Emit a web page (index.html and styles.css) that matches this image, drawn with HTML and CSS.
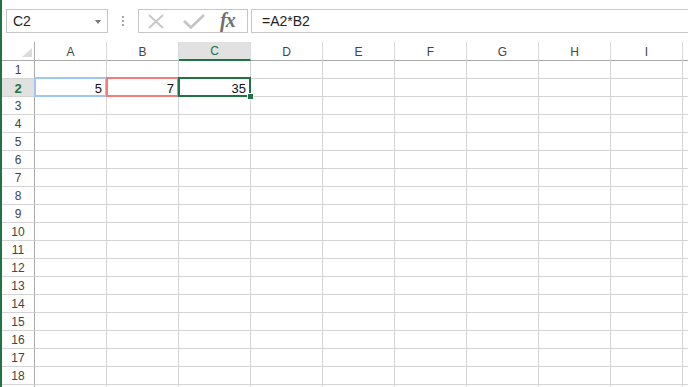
FILE: index.html
```html
<!DOCTYPE html>
<html lang="ja">
<head>
    <meta charset="UTF-8">
    <title>Book1 - Excel</title>
    <link rel="stylesheet" href="styles.css">
</head>
<body>
<div class="window">
    <div class="formula-bar">
        <div class="name-box">
            <span>C2</span>
            <span class="arrow"></span>
        </div>
        <div class="grip"><i></i><i></i><i></i></div>
        <div class="fx-box">
            <svg class="cancel" width="18" height="15" viewBox="0 0 18 15">
                <path d="M2 1 L16 14 M16 1 L2 14" stroke="#c9c9c9" stroke-width="2" fill="none"/>
            </svg>
            <svg class="enter" width="22" height="15" viewBox="0 0 22 15">
                <path d="M1 7 L8 13.5 L21 1" stroke="#c4c4c4" stroke-width="2.6" fill="none"/>
            </svg>
            <span class="fx">fx</span>
        </div>
        <div class="formula">=A2*B2</div>
    </div>

    <table class="sheet">
        <colgroup>
            <col class="col-head">
            <col class="col"><col class="col"><col class="col"><col class="col"><col class="col">
            <col class="col"><col class="col"><col class="col"><col class="col">
            <col>
        </colgroup>
        <thead>
            <tr class="head-row">
                <th class="corner"><span class="tri"></span></th>
                <th>A</th><th>B</th><th class="active">C</th><th>D</th><th>E</th>
                <th>F</th><th>G</th><th>H</th><th>I</th><th></th>
            </tr>
        </thead>
        <tbody>
            <tr><th>1</th><td></td><td></td><td></td><td></td><td></td><td></td><td></td><td></td><td></td><td></td></tr>
            <tr>
                <th class="active">2</th>
                <td class="num ref-a">5</td>
                <td class="num ref-b">7</td>
                <td class="num current">35<span class="handle"></span></td>
                <td></td><td></td><td></td><td></td><td></td><td></td><td></td>
            </tr>
            <tr><th>3</th><td></td><td></td><td></td><td></td><td></td><td></td><td></td><td></td><td></td><td></td></tr>
            <tr><th>4</th><td></td><td></td><td></td><td></td><td></td><td></td><td></td><td></td><td></td><td></td></tr>
            <tr><th>5</th><td></td><td></td><td></td><td></td><td></td><td></td><td></td><td></td><td></td><td></td></tr>
            <tr><th>6</th><td></td><td></td><td></td><td></td><td></td><td></td><td></td><td></td><td></td><td></td></tr>
            <tr><th>7</th><td></td><td></td><td></td><td></td><td></td><td></td><td></td><td></td><td></td><td></td></tr>
            <tr><th>8</th><td></td><td></td><td></td><td></td><td></td><td></td><td></td><td></td><td></td><td></td></tr>
            <tr><th>9</th><td></td><td></td><td></td><td></td><td></td><td></td><td></td><td></td><td></td><td></td></tr>
            <tr><th>10</th><td></td><td></td><td></td><td></td><td></td><td></td><td></td><td></td><td></td><td></td></tr>
            <tr><th>11</th><td></td><td></td><td></td><td></td><td></td><td></td><td></td><td></td><td></td><td></td></tr>
            <tr><th>12</th><td></td><td></td><td></td><td></td><td></td><td></td><td></td><td></td><td></td><td></td></tr>
            <tr><th>13</th><td></td><td></td><td></td><td></td><td></td><td></td><td></td><td></td><td></td><td></td></tr>
            <tr><th>14</th><td></td><td></td><td></td><td></td><td></td><td></td><td></td><td></td><td></td><td></td></tr>
            <tr><th>15</th><td></td><td></td><td></td><td></td><td></td><td></td><td></td><td></td><td></td><td></td></tr>
            <tr><th>16</th><td></td><td></td><td></td><td></td><td></td><td></td><td></td><td></td><td></td><td></td></tr>
            <tr><th>17</th><td></td><td></td><td></td><td></td><td></td><td></td><td></td><td></td><td></td><td></td></tr>
            <tr><th>18</th><td></td><td></td><td></td><td></td><td></td><td></td><td></td><td></td><td></td><td></td></tr>
            <tr><th></th><td></td><td></td><td></td><td></td><td></td><td></td><td></td><td></td><td></td><td></td></tr>
        </tbody>
    </table>
</div>
</body>
</html>
```

FILE: styles.css
```css
* {
    margin: 0;
    padding: 0;
    box-sizing: border-box;
}
body {
    font-family: "Liberation Sans", Arial, sans-serif;
    background: #ffffff;
    overflow: hidden;
}
.window {
    width: 688px;
    height: 387px;
    border-left: 2px solid #217346;
    overflow: hidden;
}

/* formula bar */
.formula-bar {
    display: flex;
    align-items: flex-start;
    height: 42px;
    padding-top: 9px;
}
.name-box {
    display: flex;
    align-items: center;
    justify-content: space-between;
    width: 102px;
    height: 24px;
    margin-left: 4px;
    padding: 0 6px 0 6px;
    border: 1px solid #c6c6c6;
    font-size: 14px;
    color: #222;
}
.name-box .arrow {
    width: 0;
    height: 0;
    border-left: 3.5px solid transparent;
    border-right: 3.5px solid transparent;
    border-top: 4px solid #777;
    margin-top: 1px;
}
.grip {
    display: flex;
    flex-direction: column;
    align-items: center;
    gap: 2px;
    width: 30px;
    padding-top: 7px;
}
.grip i {
    width: 2px;
    height: 2px;
    background: #a6a6a6;
}
.fx-box {
    display: flex;
    align-items: center;
    width: 110px;
    height: 24px;
    border: 1px solid #c6c6c6;
}
.fx-box .cancel {
    margin-left: 8px;
}
.fx-box .enter {
    margin-left: 18px;
}
.fx-box .fx {
    margin-left: 15px;
    font-family: "Liberation Serif", "Times New Roman", serif;
    font-style: italic;
    font-weight: bold;
    font-size: 20px;
    color: #707070;
    letter-spacing: -1px;
    line-height: 1;
    margin-top: -2px;
}
.formula {
    flex: 1;
    height: 24px;
    margin-left: 3px;
    margin-right: -4px;
    padding-left: 10px;
    border: 1px solid #c6c6c6;
    font-size: 14px;
    line-height: 22px;
    color: #222;
}

/* sheet grid */
.sheet {
    width: 690px;
    table-layout: fixed;
    border-collapse: separate;
    border-spacing: 0;
}
.col-head {
    width: 33px;
}
.col {
    width: 72px;
}
.sheet tr {
    height: 18px;
}
.sheet .head-row {
    height: 19px;
}
.sheet th {
    font-weight: normal;
    font-size: 12px;
    color: #444;
    background: #ffffff;
    text-align: center;
}
.head-row th {
    border-right: 1px solid #dadada;
    border-bottom: 1px solid #ababab;
    vertical-align: middle;
    padding-top: 1px;
}
.head-row th.corner {
    position: relative;
    border-right: 1px solid #ababab;
}
.corner .tri {
    position: absolute;
    right: 2px;
    bottom: 3px;
    width: 0;
    height: 0;
    border-left: 10px solid transparent;
    border-bottom: 9px solid #dcdcdc;
}
.head-row th.active {
    background: #e1e1e1;
    color: #217346;
    border-bottom: 2px solid #217346;
}
tbody th {
    border-right: 1px solid #ababab;
    border-bottom: 1px solid #d4d4d4;
    padding-top: 1px;
}
tbody th.active {
    background: #e1e1e1;
    color: #217346;
    font-weight: bold;
    font-size: 13px;
}
.sheet td {
    border-right: 1px solid #d4d4d4;
    border-bottom: 1px solid #d4d4d4;
    font-size: 13px;
    color: #111;
    padding: 1px 4px 0 0;
}
.sheet td.num {
    position: relative;
    text-align: right;
}
.ref-a::after,
.ref-b::after,
.current::after {
    content: "";
    position: absolute;
    top: -2px;
    left: -1px;
    right: -1px;
    bottom: -1px;
    border: 2px solid;
}
.ref-a::after {
    border-color: #9cc8f2;
}
.ref-b::after {
    border-color: #f57b7b;
}
.current::after {
    border-color: #217346;
}
.current .handle {
    position: absolute;
    right: -4px;
    bottom: -4px;
    width: 7px;
    height: 7px;
    background: #217346;
    border: 1px solid #ffffff;
    z-index: 1;
}
```
